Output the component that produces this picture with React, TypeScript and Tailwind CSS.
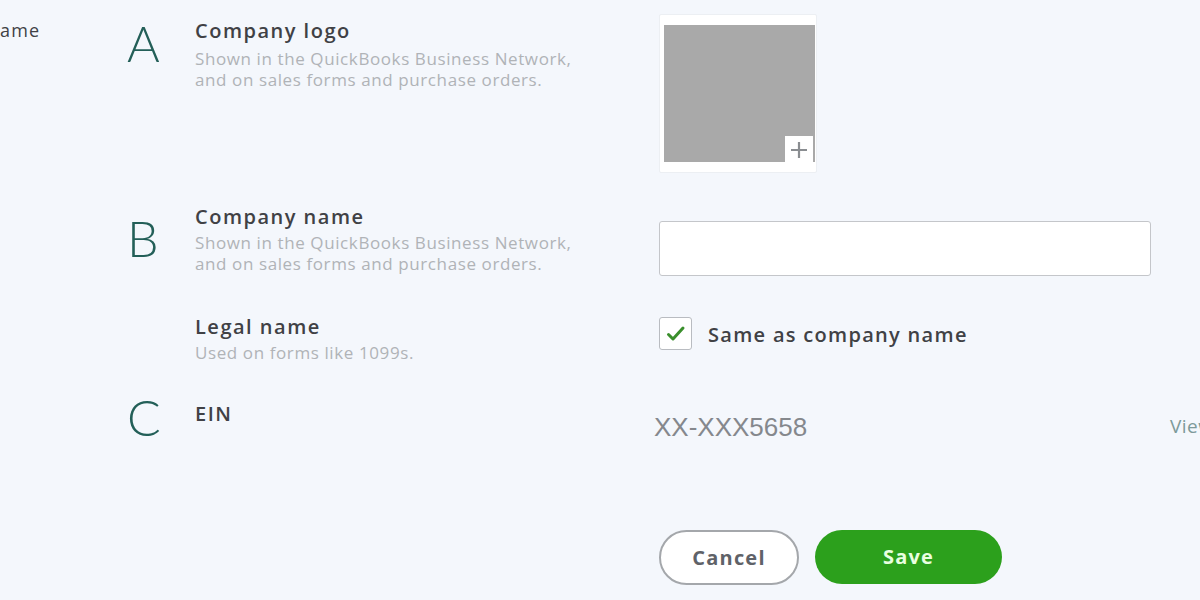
import React from "react";

function Letter({ ch, className = "" }: { ch: string; className?: string }) {
  return (
    <div
      className={`w-[68px] shrink-0 text-[50px] leading-none text-[#235f58] font-light ${className}`}
      style={{ fontFamily: "Lato, sans-serif" }}
    >
      {ch}
    </div>
  );
}

function Label({
  title,
  desc,
  className = "",
  descClass = "mt-[1px]",
}: {
  title: string;
  desc?: string[];
  className?: string;
  descClass?: string;
}) {
  return (
    <div className={`w-[464px] shrink-0 ${className}`}>
      <div className="text-[20px] leading-[26px] font-semibold tracking-[1.5px] text-[#404145]">{title}</div>
      {desc && (
        <div className={`text-[17px] leading-[21px] tracking-[0.6px] text-[#b0b3b7] ${descClass}`}>
          {desc.map((d) => (
            <div key={d} className="whitespace-nowrap">
              {d}
            </div>
          ))}
        </div>
      )}
    </div>
  );
}

export default function App() {
  const desc = ["Shown in the QuickBooks Business Network,", "and on sales forms and purchase orders."];
  return (
    <div
      className="w-[1200px] h-[600px] overflow-hidden bg-[#f4f7fc] flex"
      style={{ fontFamily: "'Open Sans', Lato, sans-serif" }}
    >
      <div className="w-[127px] shrink-0 pt-[17px] text-[18px] leading-[26px] tracking-[1.2px] text-[#404145]">
        ame
      </div>

      <div className="flex-1 flex flex-col">
        {/* Row A: Company logo */}
        <div className="flex h-[200px] items-start">
          <Letter ch="A" className="pt-[18px]" />
          <Label title="Company logo" desc={desc} className="pt-[18px]" descClass="mt-[4px]" />
          <div className="pt-[14px]">
            <div className="w-[158px] h-[159px] bg-white border border-[#eceff3] rounded-[2px] pt-[10px] pl-[4px]">
              <div className="relative w-[151px] h-[137px] bg-[#a9a9a9]">
                <div className="absolute right-[2px] bottom-[-1px] w-[28px] h-[27px] bg-white flex items-center justify-center">
                  <svg width="20" height="20" viewBox="0 0 20 20">
                    <path d="M10 2v16M2 10h16" stroke="#8a8d91" strokeWidth="2.2" />
                  </svg>
                </div>
              </div>
            </div>
          </div>
        </div>

        {/* Row B: Company name */}
        <div className="flex h-[100px] items-start">
          <Letter ch="B" className="pt-[13px]" />
          <Label title="Company name" desc={desc} className="pt-[4px]" descClass="mt-[2px]" />
          <div className="pt-[21px]">
            <div className="w-[492px] h-[55px] bg-white border border-[#c4c6ca] rounded-[3px]" />
          </div>
        </div>

        {/* Legal name */}
        <div className="flex h-[80px] items-start">
          <div className="w-[68px] shrink-0" />
          <Label title="Legal name" desc={["Used on forms like 1099s."]} className="pt-[14px]" descClass="mt-[2px]" />
          <div className="pt-[17px] flex items-center gap-[16px]">
            <div className="w-[33px] h-[33px] bg-white border-[1.5px] border-[#b9bcc1] rounded-[3px] flex items-center justify-center">
              <svg width="22" height="22" viewBox="0 0 22 22">
                <path
                  d="M3.5 11.5l4.5 4.5L18 5"
                  fill="none"
                  stroke="#3a8f2c"
                  strokeWidth="3"
                  strokeLinecap="round"
                  strokeLinejoin="round"
                />
              </svg>
            </div>
            <div className="pt-[3px] text-[20px] leading-[26px] font-semibold tracking-[1.3px] text-[#404145] whitespace-nowrap">
              Same as company name
            </div>
          </div>
        </div>

        {/* Row C: EIN */}
        <div className="flex h-[120px] items-start">
          <Letter ch="C" className="pt-[12px]" />
          <div className="w-[464px] shrink-0 pt-[21px] text-[20px] leading-[26px] font-semibold tracking-[1.5px] text-[#404145]">
            EIN
          </div>
          <div className="flex pt-[32px] ml-[-5px]">
            <div
              className="w-[516px] shrink-0 text-[26px] leading-[30px] text-[#85888d] whitespace-nowrap"
              style={{ fontFamily: "'Liberation Sans', Arial, sans-serif" }}
            >
              XX-XXX5658
            </div>
            <div className="pt-[2px] text-[19px] leading-[24px] tracking-[0.5px] text-[#7d9a9a] whitespace-nowrap">
              View
            </div>
          </div>
        </div>

        {/* Buttons */}
        <div className="flex pt-[30px]">
          <div className="w-[532px] shrink-0" />
          <div className="flex gap-[16px]">
            <button className="w-[140px] h-[55px] rounded-full border-2 border-[#a4a7ab] bg-white text-[20px] font-bold tracking-[1.2px] text-[#5f6268]">
              Cancel
            </button>
            <button className="w-[187px] h-[54px] rounded-full bg-[#2ca01c] text-[20px] font-bold tracking-[1.2px] text-[#e9ffe0]">
              Save
            </button>
          </div>
        </div>
      </div>
    </div>
  );
}
